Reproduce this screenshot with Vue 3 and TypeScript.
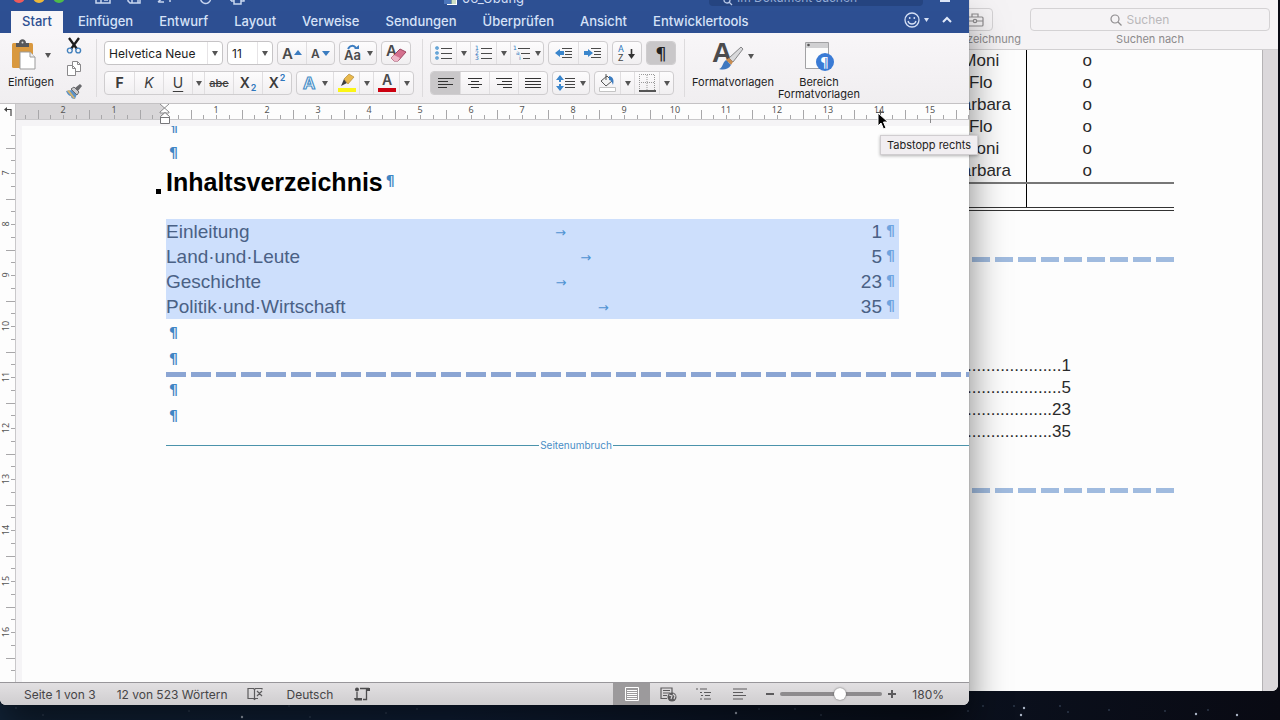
<script setup lang="ts">
import { ref } from 'vue'

interface TocEntry {
  title: string
  page: string
}

const tabs: string[] = ['Start', 'Einfügen', 'Entwurf', 'Layout', 'Verweise', 'Sendungen', 'Überprüfen', 'Ansicht', 'Entwicklertools']
const activeTab = ref('Start')
const fontName = ref('Helvetica Neue')
const fontSize = ref('11')
const zoom = ref(60)

const toc: TocEntry[] = [
  { title: 'Einleitung', page: '1' },
  { title: 'Land·und·Leute', page: '5' },
  { title: 'Geschichte', page: '23' },
  { title: 'Politik·und·Wirtschaft', page: '35' },
]
const names: string[] = ['Moni', 'Flo', 'Barbara', 'Flo', 'Moni', 'Barbara']
const leader = '.'.repeat(24)

/* Ruler geometry: one centimetre is 51 units, origin at the left text margin. */
const CM = 51
const hOrigin = 149
const hNumbers = [-2, -1, 1, 2, 3, 4, 5, 6, 7, 8, 9, 10, 11, 12, 13, 14, 15]
const hTicks = Array.from({ length: 75 }, (_, i) => i - 11).filter((q) => q !== 0)
const vNumbers = [7, 8, 9, 10, 11, 12, 13, 14, 15, 16]
const vTicks = Array.from({ length: 44 }, (_, i) => i - 3)
const isHalf = (q: number): boolean => Math.abs(q) % 4 === 2
const hx = (q: number): number => Math.round(hOrigin + (q * CM) / 4) + 0.5
const vy = (q: number): number => Math.round(53 + (q * CM) / 4) + 0.5

const stars = [
  [16, 6, 1], [43, 13, 1], [189, 9, 1], [242, 15, 2], [289, 4, 1], [310, 15, 1], [386, 11, 1], [417, 7, 1],
  [736, 11, 2], [759, 7, 1], [795, 7, 1], [821, 13, 1], [968, 9, 1], [983, 4, 1], [1014, 4, 1], [1024, 6, 2],
  [1021, 13, 2], [1060, 4, 1], [1068, 10, 1], [1109, 8, 1], [1165, 9, 1], [1196, 12, 2], [1208, 8, 1], [1237, 13, 2],
]
</script>

<template>
  <div class="desktop">
    <svg class="stars" height="18" aria-hidden="true">
      <circle v-for="(s, i) in stars" :key="i" :cx="s[0]" :cy="s[1]" :r="s[2] === 2 ? 1.2 : 0.8" :fill="s[2] === 2 ? '#a9b4c4' : '#46566b'" />
    </svg>

    <!-- Second document window behind -->
    <section class="back-window">
      <header class="back-toolbar">
        <div class="back-tool">
          <button class="toolbox" aria-label="Werkzeuge">
            <svg width="18" height="16" viewBox="0 0 18 16" fill="none" stroke="#8f8d8f" stroke-width="1.2">
              <rect x="1" y="5" width="16" height="9" rx="1" /><path d="M6 5V2h6v3M1 9h6M11 9h6" /><circle cx="9" cy="9" r="1.7" />
            </svg>
          </button>
          <span>zeichnung</span>
        </div>
        <div class="back-search">
          <label class="search-field" for="back-search">
            <svg width="12" height="12" viewBox="0 0 12 12" fill="none" stroke="#8f8d8f" stroke-width="1.2"><circle cx="5" cy="5" r="4" /><path d="M8 8l3.5 3.5" /></svg>
            <input id="back-search" type="text" placeholder="Suchen" />
          </label>
          <label for="back-search">Suchen nach</label>
        </div>
      </header>
      <div class="back-body">
        <div class="back-page">
          <table class="names">
            <tbody>
              <tr v-for="(n, i) in names" :key="i"><td class="name">{{ n }}</td><td class="mark">o</td><td class="rest"></td></tr>
              <tr class="sum"><td class="name"></td><td class="mark"></td><td class="rest"></td></tr>
            </tbody>
          </table>
          <div class="back-dash first"></div>
          <div class="back-toc">
            <div v-for="t in toc" :key="t.page" class="back-line"><span class="leader">{{ leader }}</span><span>{{ t.page }}</span></div>
          </div>
          <div class="back-dash"></div>
        </div>
        <div class="back-scroll"></div>
      </div>
    </section>

    <!-- Word window in front -->
    <main class="window">
      <header class="titlebar">
        <div class="lights"><i class="red"></i><i class="yellow"></i><i class="green"></i></div>
        <div class="quick">
          <svg width="150" height="14" viewBox="0 0 150 14" fill="none" stroke="#c8d6f0" stroke-width="1.5">
            <path d="M2 1h14v10H2zM7 2v9M10 8h4" />
            <path d="M34 1h12v10H36l-2-2zM38 11V7h6v4" />
            <path d="M64 10l8-7M64 10h6M76 4v6" />
            <path d="M108 3a5 5 0 1 0 8 1" />
            <path d="M137 9V3h13v6h-3M137 9h3M140 6h7v6h-7z" />
          </svg>
        </div>
        <div class="doc-title">
          <svg width="14" height="14" viewBox="0 0 14 14"><path d="M3 0h10v13H3z" fill="#fff" /><path d="M0 4h8v8H0z" fill="#4c76bb" /><path d="M7 9h5M7 11h5" stroke="#9bbf8a" /></svg>
          <span>06_Übung</span>
        </div>
        <label class="title-search"><svg width="10" height="10" viewBox="0 0 10 10" fill="none" stroke="#b9c9e8" stroke-width="1.3"><circle cx="4" cy="4" r="3" /><path d="M6 6l3 3" /></svg><input type="text" placeholder="Im Dokument suchen" aria-label="Im Dokument suchen" /></label>
        <svg class="share" width="12" height="12" viewBox="0 0 12 12"><path d="M1 4h10v6H1z" fill="#dbe5f7" /></svg>
      </header>

      <nav class="tabs">
        <button v-for="t in tabs" :key="t" :class="['tab', { active: t === activeTab }]" @click="activeTab = t">{{ t }}</button>
        <span class="grow"></span>
        <button class="smile" aria-label="Feedback">
          <svg width="26" height="16" viewBox="0 0 26 16" fill="none" stroke="#d5e0f5" stroke-width="1.3">
            <circle cx="8" cy="8" r="7" /><path d="M4 9c1 4 7 4 8 0" /><circle cx="5.7" cy="6" r=".9" fill="#d5e0f5" stroke="none" /><circle cx="10.3" cy="6" r=".9" fill="#d5e0f5" stroke="none" /><path d="M20 6h5l-2.5 4z" fill="#d5e0f5" stroke="none" />
          </svg>
        </button>
        <button class="collapse" aria-label="Menüband einklappen">
          <svg width="10" height="8" viewBox="0 0 10 8" fill="none" stroke="#e2eafa" stroke-width="2"><path d="M1 6l4-4 4 4" /></svg>
        </button>
      </nav>

      <div class="ribbon">
        <div class="group paste-group">
          <button class="paste">
            <span class="paste-icon">
              <svg width="26" height="32" viewBox="0 0 26 32">
                <rect x="1" y="4" width="21" height="25" rx="1.5" fill="#d9993f" />
                <path d="M5 8V4h3c0-5 7-5 7 0h3v4z" fill="#57585b" /><circle cx="11.5" cy="3.5" r="1" fill="#ddd" />
                <path d="M9 13h10l5 5v12H9z" fill="#fff" stroke="#9b9b9b" /><path d="M19 13v5h5" fill="#eee" stroke="#9b9b9b" />
              </svg>
              <i class="arrow"></i>
            </span>
            <span>Einfügen</span>
          </button>
          <div class="clip">
            <button aria-label="Ausschneiden">
              <svg width="16" height="17" viewBox="0 0 16 17" fill="none"><path d="M3 1l8 11M13 1L5 12" stroke="#1c1c1c" stroke-width="2.3" /><circle cx="3.8" cy="13.5" r="2.4" stroke="#4381bd" stroke-width="1.4" /><circle cx="12.2" cy="13.5" r="2.4" stroke="#4381bd" stroke-width="1.4" /></svg>
            </button>
            <button aria-label="Kopieren">
              <svg width="16" height="17" viewBox="0 0 16 17" fill="#fff" stroke="#8a898b"><path d="M6.5 1.5h5l3 3v7h-8z" /><path d="M1.500 5.500h5l3 3v7h-8z" /><path d="M6.500 5.500v3h3M11.500 1.500v3h3" fill="none" /></svg>
            </button>
            <button aria-label="Format übertragen">
              <svg width="16" height="17" viewBox="0 0 16 17"><path d="M0 8l6-1 5 4-2 5c-3 0-4-1-4-3-2 0-4-2-5-5z" fill="#5d93c7" /><path d="M1 8l2-1 6 8-1 1z" fill="#d6b36c" /><path d="M5 6l3-2 5 5-2 3z" fill="#cbcbcd" stroke="#68696c" /><path d="M9 5l5-4 2 2-4 5z" fill="#68696c" /></svg>
            </button>
          </div>
        </div>

        <div class="group">
          <div class="row">
            <label class="combo font-name"><select v-model="fontName" aria-label="Schriftart"><option>Helvetica Neue</option></select><i class="arrow"></i></label>
            <label class="combo font-size"><select v-model="fontSize" aria-label="Schriftgrad"><option>11</option></select><i class="arrow"></i></label>
            <div class="seg">
              <button class="w28" aria-label="Schrift vergrößern"><svg width="22" height="16" viewBox="0 0 22 16"><text x="1" y="14" class="ic" font-size="15">A</text><path d="M13 10h8l-4-5z" fill="#3b7cc0" /></svg></button>
              <button class="w28" aria-label="Schrift verkleinern"><svg width="22" height="16" viewBox="0 0 22 16"><text x="1" y="13" class="ic" font-size="12">A</text><path d="M12 6h8l-4 5z" fill="#3b7cc0" /></svg></button>
            </div>
            <div class="seg"><button class="w36" aria-label="Groß-/Kleinschreibung"><svg width="20" height="18" viewBox="0 0 20 18"><text x="1" y="16" class="ic" font-size="13">Aa</text><path d="M5 5c2-4 6-4 8-1" fill="none" stroke="#3b7cc0" stroke-width="2" /><path d="M11 5h5V1z" fill="#3b7cc0" /></svg><i class="arrow"></i></button></div>
            <div class="seg"><button class="w28" aria-label="Formatierung löschen"><svg width="22" height="20" viewBox="0 0 22 20"><text x="1" y="13" class="ic" font-size="15">A</text><path d="M6 15l9-9 6 3-8 9H9z" fill="#d4708e" stroke="#9e4562" /><path d="M6 15l3-3 6 3-2 3H9z" fill="#edb5c6" /></svg></button></div>
          </div>
          <div class="row">
            <div class="seg">
              <button class="w29 bold">F</button>
              <button class="w29 italic">K</button>
              <button class="w29 under">U</button>
              <button class="w12" aria-label="Unterstreichungsart"><i class="arrow"></i></button>
              <button class="w29 strike">abc</button>
              <button class="w29 sub">X<small>2</small></button>
              <button class="w29 sup">X<small>2</small></button>
            </div>
            <div class="seg">
              <button class="w36" aria-label="Texteffekte"><svg width="16" height="18" viewBox="0 0 16 18"><text x="1" y="15" font-size="17" font-weight="700" font-family="Liberation Sans, sans-serif" fill="#fff" stroke="#4a90c8" stroke-width="1.2">A</text></svg><i class="arrow"></i></button>
              <button class="w26" aria-label="Texthervorhebungsfarbe"><svg width="20" height="20" viewBox="0 0 20 20"><path d="M1 15h18v4H1z" fill="#fbf516" /><path d="M4 13l3-7 3 4z" fill="#3f3f3f" /><path d="M7 6l5-5 5 3-6 7z" fill="#e9b94d" stroke="#a87d2b" stroke-width=".6" /></svg></button>
              <button class="w14" aria-label="Hervorhebungsfarbe wählen"><i class="arrow"></i></button>
              <button class="w26" aria-label="Schriftfarbe"><svg width="20" height="20" viewBox="0 0 20 20"><path d="M1 15h18v4H1z" fill="#cc0010" /><text x="5" y="12" class="ic" font-size="14">A</text></svg></button>
              <button class="w14" aria-label="Schriftfarbe wählen"><i class="arrow"></i></button>
            </div>
          </div>
        </div>

        <div class="group">
          <div class="row">
            <div class="seg">
              <button class="w24" aria-label="Aufzählung"><svg width="18" height="16" viewBox="0 0 18 16" fill="none" stroke="#4a4a4a" stroke-width="1.2"><path d="M6 3.500h11M6 8.500h11M6 13.500h11" /><g stroke="#3f8fce"><circle cx="2" cy="3" r="1.2" /><circle cx="2" cy="8" r="1.2" /><circle cx="2" cy="13" r="1.2" /></g></svg></button>
              <button class="w14" aria-label="Aufzählungszeichen"><i class="arrow"></i></button>
              <button class="w26" aria-label="Nummerierung"><svg width="18" height="16" viewBox="0 0 18 16"><path d="M6 3.500h11M6 8.500h11M6 13.500h11" stroke="#4a4a4a" stroke-width="1.2" /><g class="num"><text x="0" y="5">1</text><text x="0" y="10">2</text><text x="0" y="15">3</text></g></svg></button>
              <button class="w14" aria-label="Nummerierungsart"><i class="arrow"></i></button>
              <button class="w33" aria-label="Liste mit mehreren Ebenen"><svg width="18" height="16" viewBox="0 0 18 16"><path d="M5 3.500h12M8 8.500h9M10 13.500h7" stroke="#4a4a4a" stroke-width="1.2" /><g class="num"><text x="0" y="5">1</text><text x="3" y="10">a</text><text x="6" y="15">i</text></g></svg><i class="arrow"></i></button>
            </div>
            <div class="seg">
              <button class="w29" aria-label="Einzug verkleinern"><svg width="18" height="14" viewBox="0 0 18 14"><path d="M7 2.500h10M10 5.500h7M10 8.500h7M7 11.500h10" stroke="#4a4a4a" stroke-width="1.2" /><path d="M0 7l5-4v2h4v4H5v2z" fill="#3b86cc" /></svg></button>
              <button class="w29" aria-label="Einzug vergrößern"><svg width="18" height="14" viewBox="0 0 18 14"><path d="M7 2.500h10M10 5.500h7M10 8.500h7M7 11.500h10" stroke="#4a4a4a" stroke-width="1.2" /><path d="M9 7L4 3v2H0v4h4v2z" fill="#3b86cc" /></svg></button>
            </div>
            <div class="seg"><button class="w28" aria-label="Sortieren"><svg width="20" height="18" viewBox="0 0 20 18"><text x="1" y="8" font-size="9" font-family="Roboto, sans-serif" fill="#2f77bd">A</text><text x="1" y="17" font-size="9" font-family="Roboto, sans-serif" fill="#444">Z</text><path d="M14.500 5v8" stroke="#333" stroke-width="1.600" /><path d="M11 10h7l-3.500 5z" fill="#333" /></svg></button></div>
            <div class="seg"><button class="w28 pressed pil">¶</button></div>
          </div>
          <div class="row">
            <div class="seg">
              <button class="w29 pressed" aria-label="Linksbündig"><svg width="16" height="12" viewBox="0 0 16 12" stroke="#333" stroke-width="1.100"><path d="M0 1.500h16M0 4.500h10M0 7.500h15M0 10.500h9" /></svg></button>
              <button class="w29" aria-label="Zentriert"><svg width="16" height="12" viewBox="0 0 16 12" stroke="#333" stroke-width="1.100"><path d="M1 1.500h14M4 4.500h8M1 7.500h14M4 10.500h8" /></svg></button>
              <button class="w29" aria-label="Rechtsbündig"><svg width="16" height="12" viewBox="0 0 16 12" stroke="#333" stroke-width="1.100"><path d="M0 1.500h16M6 4.500h10M1 7.500h15M7 10.500h9" /></svg></button>
              <button class="w29" aria-label="Blocksatz"><svg width="16" height="12" viewBox="0 0 16 12" stroke="#333" stroke-width="1.100"><path d="M0 1.500h16M0 4.500h16M0 7.500h16M0 10.500h16" /></svg></button>
            </div>
            <div class="seg"><button class="w36" aria-label="Zeilenabstand"><svg width="20" height="16" viewBox="0 0 20 16"><path d="M9 3.500h10M9 6.500h10M9 9.500h10M9 12.500h10" stroke="#444" stroke-width="1.100" /><path d="M4 0l4 5H5v2H3V5H0zM4 16l4-5H5V9H3v2H0z" fill="#3b86cc" /></svg><i class="arrow"></i></button></div>
            <div class="seg">
              <button class="w24" aria-label="Schattierung"><svg width="20" height="20" viewBox="0 0 20 20"><path d="M1.500 14.500h16v4h-16z" fill="#fff" stroke="#c4c4c4" /><path d="M3 8l6-5 5 5-6 5z" fill="#f3f3f3" stroke="#555" /><path d="M8 1v6" stroke="#555" fill="none" /><path d="M11 3c5 1 5 5 4 9-1-3-2-5-4-5z" fill="#3b7cc0" /></svg></button>
              <button class="w14" aria-label="Schattierungsfarbe"><i class="arrow"></i></button>
              <button class="w24" aria-label="Rahmen"><svg width="18" height="20" viewBox="0 0 18 20" fill="none"><path d="M1.500 18V1.500h15V18M9 2v16M1 9.500h16" stroke="#999" stroke-dasharray="1 1" /><path d="M1 18h17" stroke="#222" stroke-width="1.400" /></svg></button>
              <button class="w14" aria-label="Rahmenart"><i class="arrow"></i></button>
            </div>
          </div>
        </div>

        <div class="group styles">
          <button class="big">
            <span class="paste-icon shifted">
              <svg width="32" height="30" viewBox="0 0 32 30"><text x="0" y="21" font-size="28" font-weight="700" font-family="Liberation Sans, sans-serif" fill="#4b4b4d">A</text><path d="M17 17L29 6l2 2-10 13z" fill="#d9d9db" stroke="#6d6d70" stroke-width=".8" /><path d="M14 19l3-2 4 4-2 3z" fill="#c98d52" /><path d="M7 28c4-1 3-6 7-9l5 5c-3 5-8 5-12 4z" fill="#3f78c0" /></svg>
              <i class="arrow"></i>
            </span>
            <span>Formatvorlagen</span>
          </button>
          <button class="big">
            <span class="paste-icon">
              <svg width="30" height="30" viewBox="0 0 30 30"><path d="M1.500 1.500h23v26h-23z" fill="#fcfcfc" stroke="#a2a2a4" /><path d="M2 2h22v5H2z" fill="#d0d0d2" /><circle cx="4.500" cy="4" r="1.300" fill="#555" /><circle cx="21" cy="21" r="9" fill="#3a7bd5" /><text x="16" y="26" font-size="14" font-family="DejaVu Sans, sans-serif" fill="#fff">¶</text></svg>
            </span>
            <span>Bereich<br />Formatvorlagen</span>
          </button>
        </div>
      </div>

      <div class="ruler">
        <div class="ruler-corner"><svg width="10" height="11" viewBox="0 0 10 11" fill="none" stroke="#444" stroke-width="1.2"><path d="M2 3.500h6V10" /><path d="M4 1L1 3.500 4 6z" fill="#444" stroke="none" /></svg></div>
        <div class="ruler-track">
          <svg width="953" height="20" viewBox="0 0 953 20">
            <rect x="0" y="0" width="149" height="15" fill="#d8d6d8" />
            <path d="M0 15.500h953" stroke="#c9c8ca" />
            <path v-for="q in hTicks" :key="q" :d="`M${hx(q)} ${isHalf(q) ? 6 : 11}V15`" stroke="#a8a7a9" />
            <text v-for="n in hNumbers" :key="n" :x="hOrigin + n * CM" y="9" class="ruler-num">{{ Math.abs(n) }}</text>
            <path d="M860 8.500h8M864.500 6v8" stroke="#555" />
            <path d="M914.500 15v4" stroke="#8b8b8d" />
            <path d="M144 0l9 8v1h-9V8l9-8" fill="#fff" stroke="#8b8b8d" />
            <path d="M144.500 19.500v-7l4.500-4 4.500 4v7zM144 13.500h10" fill="#fff" stroke="#77777a" />
          </svg>
        </div>
      </div>

      <div class="document">
        <div class="v-ruler">
          <svg width="16" height="562" viewBox="0 0 16 562">
            <path v-for="q in vTicks" :key="q" :d="`M${isHalf(q) ? 6 : 11} ${vy(q)}H15`" stroke="#a8a7a9" />
            <text v-for="(n, i) in vNumbers" :key="n" x="0" y="0" :transform="`translate(9 ${53 + i * CM}) rotate(-90)`" class="ruler-num">{{ n }}</text>
          </svg>
        </div>
        <article class="page">
          <p class="mark-line clipped">¶</p>
          <p class="mark-line">¶</p>
          <h1><i class="bullet"></i>Inhaltsverzeichnis<span class="pm">¶</span></h1>
          <div class="toc">
            <div v-for="t in toc" :key="t.page" class="toc-line">
              <span>{{ t.title }}</span><span class="tabmark">→</span><span>{{ t.page }}</span><span class="pm">¶</span>
            </div>
          </div>
          <p class="mark-line">¶</p>
          <p class="mark-line">¶</p>
          <div class="dash"></div>
          <p class="mark-line">¶</p>
          <p class="mark-line">¶</p>
          <div class="break"><span>Seitenumbruch</span></div>
        </article>
      </div>

      <footer class="status">
        <span class="pages">Seite 1 von 3</span>
        <span class="words">12 von 523 Wörtern</span>
        <button class="proof" aria-label="Rechtschreibung"><svg width="17" height="14" viewBox="0 0 17 14" fill="none" stroke="#5c5b5d" stroke-width="1.2"><path d="M7.500 12.500V2.500l-1-1H1v10h5.500l1 1 1-1H11M7.500 2.500l1-1H15v1M10 4l5 5M15 4l-5 5" /></svg></button>
        <span class="lang">Deutsch</span>
        <button class="track" aria-label="Änderungen nachverfolgen"><svg width="16" height="14" viewBox="0 0 16 14" fill="none" stroke="#4c4b4d" stroke-width="1.3"><path d="M3 5v7M6 1.500h9M12.500 2v10.500H9" /><circle cx="3" cy="2.500" r="2" fill="#4c4b4d" stroke="none" /><path d="M0 11h8v2.500H1z" fill="#4c4b4d" stroke="none" /><path d="M13 1h3v3h-3z" fill="#4c4b4d" stroke="none" /></svg></button>
        <span class="grow"></span>
        <div class="views">
          <button class="view on" aria-label="Drucklayout"><svg width="14" height="14" viewBox="0 0 14 14" fill="none" stroke="#fff"><path d="M.5.5h13v13H.5zM2 3.500h10M2 5.500h10M2 7.500h10M2 9.500h10M2 11.500h10" /></svg></button>
          <button class="view" aria-label="Weblayout"><svg width="17" height="15" viewBox="0 0 17 15" fill="none" stroke="#5c5b5d" stroke-width="1.2"><path d="M7 11.500H1V1h11v5M3 3.500h7M3 6h7M3 8.500h4" /><circle cx="12" cy="10" r="4.500" fill="#5c5b5d" stroke="none" /><path d="M9 8l3 1-1 3M13 7l2 2-1 3" stroke="#d8d6d8" /></svg></button>
          <button class="view" aria-label="Gliederung"><svg width="16" height="12" viewBox="0 0 16 12" stroke="#5c5b5d" stroke-width="1.2"><path d="M0 1h2M4 1h7M4 4.500h2M8 4.500h7M5 7.500h2M9 7.500h5M4 11h2M8 11h7" /></svg></button>
          <button class="view" aria-label="Entwurf"><svg width="14" height="12" viewBox="0 0 14 12" stroke="#5c5b5d" stroke-width="1.2"><path d="M0 1h14M0 4.500h10M0 7.500h13M0 11h10" /></svg></button>
        </div>
        <button class="step" aria-label="Verkleinern"><svg width="8" height="8" viewBox="0 0 8 8" stroke="#5c5b5d" stroke-width="2"><path d="M0 4h8" /></svg></button>
        <input v-model="zoom" class="slider" type="range" min="0" max="100" aria-label="Zoom" />
        <button class="step" aria-label="Vergrößern"><svg width="8" height="8" viewBox="0 0 8 8" stroke="#5c5b5d" stroke-width="2"><path d="M0 4h8M4 0v8" /></svg></button>
        <span class="percent">180%</span>
      </footer>
    </main>

    <div class="tooltip" role="tooltip">Tabstopp rechts</div>
    <svg class="cursor" width="12" height="20" viewBox="0 0 12 20" aria-hidden="true"><path d="M1 1v13l3-3 2.500 6 2.500-1-2.500-6H11z" fill="#000" stroke="#fff" stroke-width="1" /></svg>
  </div>
</template>

<style>
body {
  margin: 0;
}
</style>

<style scoped>
.desktop {
  position: relative;
  height: 100vh;
  min-height: 520px;
  overflow: hidden;
  background: linear-gradient(90deg, #13253a 0%, #10203a 35%, #0b1220 70%, #090a13 100%);
  font-family: Inter, Roboto, 'Liberation Sans', sans-serif;
  color: #222;
}
.desktop * {
  box-sizing: border-box;
}
button {
  margin: 0;
  padding: 0;
  border: 0;
  background: none;
  font: inherit;
  color: inherit;
  display: flex;
  align-items: center;
  justify-content: center;
}
svg {
  display: block;
  flex: none;
  overflow: visible;
}
.stars {
  position: absolute;
  left: 0;
  bottom: 0;
  width: 100%;
}
.grow {
  flex: 1;
}

/* back window */
.back-window {
  position: absolute;
  inset: 0 2px 29px 0;
  display: flex;
  flex-direction: column;
  overflow: hidden;
  border-radius: 0 0 6px 6px;
  background: #fdfdfd;
}
.back-toolbar {
  flex: none;
  height: 50px;
  padding: 8px 8px 0 0;
  display: flex;
  justify-content: flex-end;
  gap: 9px;
  background: #f5f3f5;
  border-bottom: 1px solid #d2d0d2;
  font-size: 11px;
  line-height: 16px;
  color: #8c8a8c;
}
.back-tool {
  display: flex;
  flex-direction: column;
  align-items: flex-end;
}
.toolbox {
  width: 36px;
  height: 23px;
  margin-right: 28px;
  border: 1px solid #d4d2d4;
  border-radius: 4px;
}
.back-search {
  width: 240px;
  text-align: center;
}
.search-field {
  height: 23px;
  padding-right: 16px;
  display: flex;
  align-items: center;
  justify-content: center;
  gap: 5px;
  border: 1px solid #d4d2d4;
  border-radius: 4px;
}
.search-field input {
  width: 48px;
  padding: 0;
  border: 0;
  background: none;
  font: 12px Inter, sans-serif;
}
.search-field input::placeholder {
  color: #bab8ba;
}
.back-body {
  flex: 1;
  display: flex;
}
.back-page {
  flex: 1;
  padding-right: 88px;
  display: flex;
  flex-direction: column;
  align-items: flex-end;
  font: 17px/22px 'Liberation Sans', Arial, sans-serif;
  color: #2a2a2a;
}
.back-scroll {
  width: 16px;
  background: #dbd8db;
  border-left: 1px solid #b5b3b5;
}
.names {
  border-collapse: collapse;
  text-align: center;
}
.names td {
  height: 22px;
  padding: 0;
}
.name {
  width: 90px;
  border-right: 1px solid #000;
}
.mark {
  width: 122px;
}
.rest {
  width: 26px;
}
.names .sum td {
  height: 26px;
  border-top: 2px solid #777;
  border-bottom: 4px double #333;
}
.back-dash {
  width: 202px;
  height: 5px;
  background: repeating-linear-gradient(90deg, #a0bbdf 0 18px, transparent 18px 23px);
}
.first {
  margin: 46px 0 93px;
}
.back-toc {
  width: 110px;
  margin: 0 103px 45px 0;
}
.back-line {
  display: flex;
  justify-content: flex-end;
}

/* front window */
.window {
  position: absolute;
  z-index: 0;
  inset: 0 311px 15px 0;
  display: flex;
  flex-direction: column;
  overflow: hidden;
  border-radius: 0 0 6px 6px;
  background: #fdfdfd;
  box-shadow: 0 24px 38px rgba(0, 0, 0, 0.5), 0 0 1px rgba(0, 0, 0, 0.6);
}
.titlebar {
  flex: none;
  height: 11px;
  overflow: hidden;
  display: flex;
  align-items: flex-end;
  padding: 0 18px 0 13px;
  background: #2d5093;
}
.lights {
  display: flex;
  gap: 8px;
  padding-bottom: 8px;
  width: 81px;
}
.lights i {
  width: 12px;
  height: 12px;
  border-radius: 6px;
}
.red {
  background: #ee5b5b;
}
.yellow {
  background: #edb83a;
}
.green {
  background: #4fbb49;
}
.quick {
  padding-bottom: 5px;
}
.doc-title {
  flex: 1;
  display: flex;
  justify-content: center;
  align-items: flex-end;
  gap: 4px;
  padding: 0 0 5px 15px;
  font-size: 13px;
  line-height: 16px;
  color: #d3dff5;
}
.title-search {
  width: 214px;
  height: 22px;
  margin-bottom: 5px;
  padding-left: 14px;
  display: flex;
  align-items: flex-end;
  gap: 4px;
  border-radius: 4px;
  background: #254480;
}
.title-search input {
  width: 160px;
  height: 16px;
  padding: 0;
  border: 0;
  background: none;
  font: 12px/16px Inter, sans-serif;
}
.title-search input::placeholder {
  color: #93abd6;
}
.share {
  margin: 0 0 7px 16px;
}
.tabs {
  flex: none;
  height: 22px;
  padding: 0 17px 0 11px;
  display: flex;
  gap: 4px;
  background: #2d4f92;
}
.tab {
  height: 22px;
  padding: 0 11px 2px;
  font-size: 13px;
  font-weight: 500;
  color: #d6e2f8;
}
.active {
  background: #f8f6f8;
  color: #2c4f92;
}
.smile {
  margin-right: 8px;
  padding-bottom: 4px;
}
.collapse {
  padding-bottom: 4px;
}
.ribbon {
  flex: none;
  height: 71px;
  display: flex;
  overflow: hidden;
  background: linear-gradient(#f8f6f8, #f0eef0);
  border-bottom: 1px solid #c4c2c4;
  font-size: 11px;
  line-height: 12px;
  color: #1d1d1d;
}
.group {
  flex: none;
  display: flex;
  flex-direction: column;
  gap: 6px;
  padding: 8px 8px 0 8px;
}
.group + .group {
  position: relative;
}
.group + .group::before {
  content: '';
  position: absolute;
  left: 0;
  top: 6px;
  bottom: 6px;
  width: 1px;
  background: #dddbdd;
}
.paste-group {
  flex-direction: row;
  gap: 12px;
  padding: 4px 14px 0 8px;
}
.paste,
.big {
  flex-direction: column;
  justify-content: flex-start;
  gap: 5px;
}
.paste {
  padding-top: 2px;
}
.paste-icon {
  display: flex;
  align-items: center;
  gap: 8px;
}
.shifted {
  gap: 4px;
}
.clip {
  display: flex;
  flex-direction: column;
  gap: 6px;
}
.row {
  display: flex;
  gap: 4px;
}
.arrow {
  flex: none;
  border: 3px solid transparent;
  border-top: 5px solid #555;
  border-bottom: 0;
}
.seg {
  display: flex;
  height: 24px;
  border: 1px solid #cfcdcf;
  border-radius: 4px;
  background: linear-gradient(#fdfcfd, #f1eff1);
  overflow: hidden;
}
.seg button + button {
  border-left: 1px solid #e0dee0;
}
.seg button {
  gap: 4px;
  font-size: 14px;
  color: #3c3c3c;
}
.w12 {
  width: 12px;
}
.w14 {
  width: 14px;
}
.w24 {
  width: 25px;
}
.w26 {
  width: 26px;
}
.w28 {
  width: 28px;
}
.w29 {
  width: 29px;
}
.w33 {
  width: 33px;
}
.w36 {
  width: 36px;
}
.pressed {
  background: #c9c7c9;
}
.seg .bold {
  font-weight: 700;
}
.seg .italic {
  font-style: italic;
}
.seg .under {
  text-decoration: underline;
  text-underline-offset: 3px;
}
.seg .strike {
  font-size: 11px;
  font-weight: 500;
  text-decoration: line-through;
}
.seg .sub,
.seg .sup {
  gap: 1px;
  font-weight: 600;
}
.sub small,
.sup small {
  font-size: 9px;
  color: #2f77bd;
}
.sub small {
  align-self: flex-end;
}
.sup small {
  align-self: flex-start;
}
.seg .pil {
  font: 18px 'DejaVu Sans', sans-serif;
  color: #222;
}
.ic {
  font-family: Inter, sans-serif;
  font-weight: 600;
  fill: #4a4a4c;
}
.num {
  font: 6px 'DejaVu Sans', sans-serif;
  fill: #2f77bd;
}
.combo {
  height: 24px;
  display: flex;
  align-items: center;
  padding-right: 4px;
  border: 1px solid #c6c4c6;
  border-radius: 4px;
  background: #fff;
}
.combo select {
  flex: 1;
  min-width: 0;
  height: 22px;
  margin-right: 4px;
  padding: 0 0 0 4px;
  border: 0;
  border-right: 1px solid #e6e4e6;
  border-radius: 0;
  appearance: none;
  background: none;
  font: 12px Inter, sans-serif;
  color: #1d1d1d;
}
.font-name {
  width: 119px;
}
.font-size {
  width: 46px;
}
.styles {
  flex-direction: row;
  gap: 4px;
  padding-left: 8px;
}
.big .paste-icon {
  min-height: 30px;
}

/* rulers */
.ruler {
  flex: none;
  height: 16px;
  display: flex;
  background: #fdfdfd;
  z-index: 1;
}
.ruler-corner {
  width: 16px;
  padding: 2px 0 0 3px;
  border-right: 1px solid #c9c8ca;
}
.ruler-track {
  flex: 1;
  min-width: 0;
  height: 20px;
}
.ruler-num {
  font: 9px 'Noto Sans', sans-serif;
  fill: #555;
  text-anchor: middle;
}
.document {
  flex: 1;
  min-height: 0;
  display: flex;
  overflow: hidden;
  background: #f5f4f6;
}
.v-ruler {
  flex: none;
  width: 16px;
  background: #fdfdfd;
  border-right: 1px solid #c9c8ca;
}
.page {
  flex: 1;
  min-width: 0;
  margin: 6px 0 0 6px;
  padding-left: 144px;
  background: #fdfdfd;
  overflow: hidden;
  font-family: 'Liberation Sans', Arial, sans-serif;
}
.mark-line,
.pm {
  font-family: 'DejaVu Sans', sans-serif;
  font-size: 14px;
  font-weight: 700;
  color: #3f86c4;
}
.mark-line {
  margin: 0;
  padding-left: 3px;
  height: 26px;
  line-height: 26px;
}
.clipped {
  height: 13px;
  line-height: 1px;
}
h1 {
  position: relative;
  height: 34px;
  margin: 0 0 20px;
  display: flex;
  gap: 3px;
  font-size: 25px;
  line-height: 34px;
  color: #000;
}
h1 .pm {
  line-height: 30px;
}
.bullet {
  position: absolute;
  left: -10px;
  top: 24px;
  width: 5px;
  height: 5px;
  background: #000;
}
.toc {
  width: 733px;
  background: #cddffc;
}
.toc-line {
  display: flex;
  height: 25px;
  line-height: 26px;
  font-size: 19px;
  color: #4a6185;
}
.toc-line .pm {
  width: 17px;
  padding-left: 4px;
  line-height: 22px;
  color: #6ea4df;
}
.tabmark {
  flex: 1;
  text-align: center;
  font: 13px/28px 'DejaVu Sans', sans-serif;
  color: #4f93d2;
}
.dash {
  height: 5px;
  margin: 1px 0 -1px;
  background: repeating-linear-gradient(90deg, #8ba5d3 0 20px, transparent 20px 25px);
}
.break {
  display: flex;
  align-items: center;
  gap: 1px;
  margin: 9px -17px 0 0;
  font: 10px/16px Inter, sans-serif;
  color: #4a8ec6;
}
.break::before,
.break::after {
  content: '';
  flex: 1;
  height: 1px;
  background: #4b93ab;
}

/* status bar */
.status {
  flex: none;
  height: 23px;
  padding: 0 25px 0 24px;
  display: flex;
  align-items: center;
  border-top: 1px solid #98969a;
  background: linear-gradient(#e2e0e2, #cfcdcf);
  font-size: 12px;
  color: #464547;
  white-space: nowrap;
}
.words {
  margin-left: 21px;
}
.proof {
  margin: 0 22px 0 20px;
}
.track {
  margin-left: 21px;
}
.views {
  display: flex;
  margin-right: 2px;
}
.view {
  width: 36px;
  height: 22px;
}
.on {
  width: 37px;
  background: #9c9a9c;
}
.step {
  width: 20px;
  height: 22px;
}
.slider {
  width: 102px;
  height: 12px;
  margin: 0;
  appearance: none;
  background: none;
}
.slider::-webkit-slider-runnable-track {
  height: 4px;
  border-radius: 2px;
  background: #8d8b8d;
}
.slider::-webkit-slider-thumb {
  appearance: none;
  width: 12px;
  height: 12px;
  margin-top: -4px;
  border-radius: 6px;
  background: #fff;
  box-shadow: 0 0 2px #555;
}
.percent {
  width: 42px;
  text-align: right;
}

/* floating layer */
.tooltip {
  position: absolute;
  z-index: 1;
  left: 880px;
  top: 135px;
  padding: 0 6px;
  border: 1px solid #d0cdd0;
  background: #f1eef1;
  box-shadow: 0 1px 3px rgba(0, 0, 0, 0.3);
  font-size: 11px;
  line-height: 18px;
  color: #222;
  white-space: nowrap;
}
.cursor {
  position: absolute;
  z-index: 2;
  left: 877px;
  top: 112px;
}
</style>
